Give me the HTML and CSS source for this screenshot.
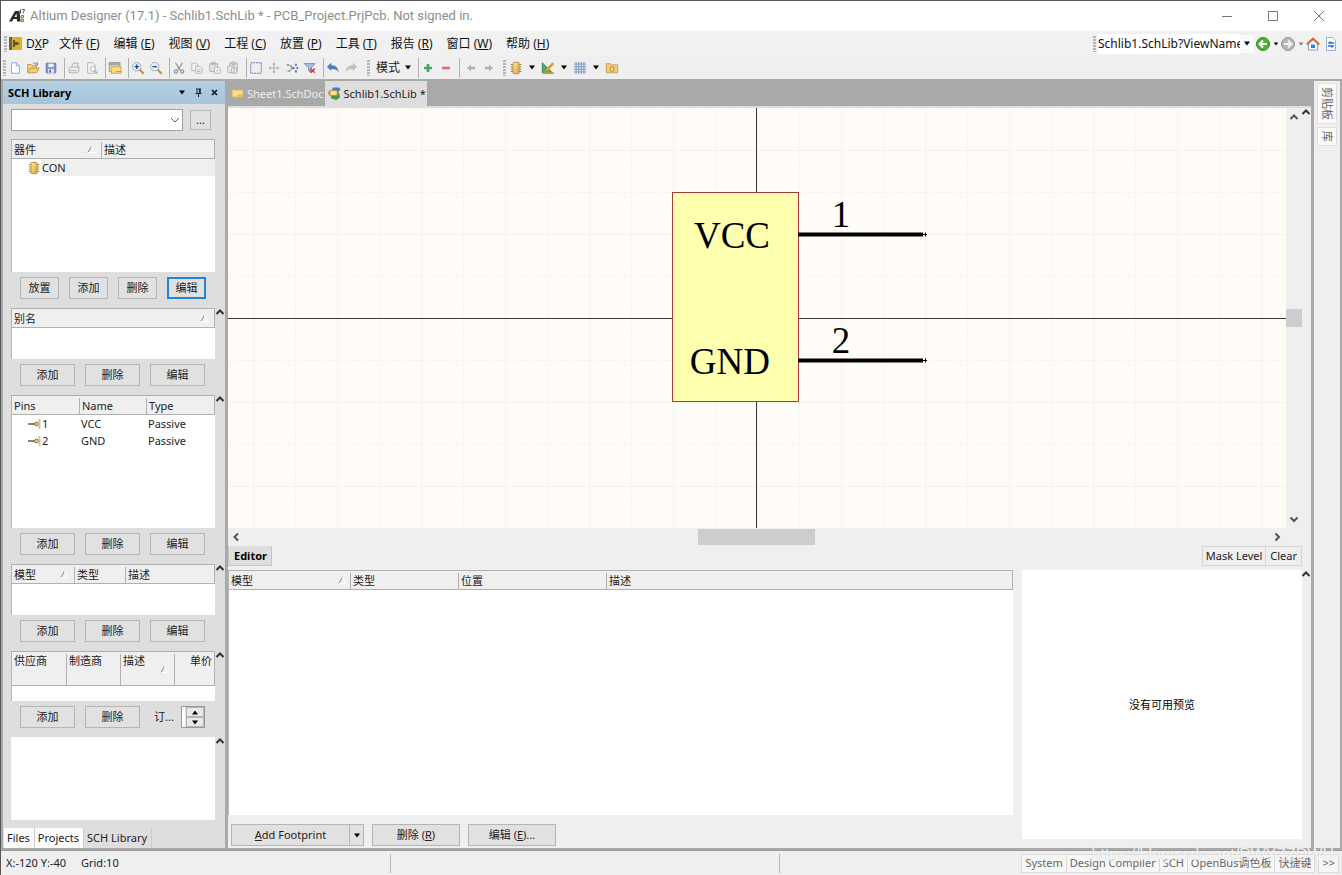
FILE: index.html
```html
<!DOCTYPE html>
<html lang="zh-CN">
<head>
<meta charset="utf-8">
<title>Altium Designer (17.1) - Schlib1.SchLib *</title>
<link rel="stylesheet" href="styles.css">
</head>
<body>
<svg class="defs" aria-hidden="true">
  <defs>
    <linearGradient id="gold" x1="0" y1="0" x2="1" y2="1"><stop offset="0" stop-color="#fbe9a9"/><stop offset="1" stop-color="#d9a93a"/></linearGradient>
    <symbol id="up" viewBox="0 0 10 10"><path d="M1.500 7 5 3.500 8.500 7" fill="none" stroke="#333" stroke-width="2"/></symbol>
    <symbol id="down" viewBox="0 0 8 5"><path d="M1 .5h6L4 4.500z" fill="#000"/></symbol>
    <symbol id="sort" viewBox="0 0 8 8"><path d="M1 7.500 4.500 1" fill="none" stroke="#888"/><path d="M4.500 1 7.500 7.500H1" fill="none" stroke="#fff"/></symbol>
    <symbol id="chip" viewBox="0 0 16 16"><path d="M2 4h12M2 6.700h12M2 9.300h12M2 12h12" stroke="#8c6f2c"/><rect x="4.500" y="1.500" width="7" height="13" rx="1" fill="url(#gold)" stroke="#b58d35"/></symbol>
    <symbol id="pin" viewBox="0 0 14 10"><path d="M1 5h7" stroke="#6b5a2a" stroke-width="1.500"/><circle cx="9.500" cy="5" r="1.800" fill="#ffe680" stroke="#6b5a2a"/><path d="M12.500 0v10" stroke="#c9c2ae" stroke-width="2"/></symbol>
  </defs>
</svg>
<div class="window">
  <header class="titlebar">
    <svg class="logo" viewBox="0 0 16 16"><path d="M0 13.500 6 3h4.500l1 10.500H8l-.2-2.500H4.500L3.200 13.500zM5.500 9h2.300L7.500 5.500z" fill="#2b2b2b"/><path d="M10.500 2.500 11.500 1.500v4M13 1.500h2.500L14 5.500" fill="none" stroke="#555"/><path d="M12 7.500h2.500v2.500H12zM12 11.500h2.500v2H12z" fill="#d9c79b" stroke="#9b8348"/></svg>
    <h1>Altium Designer (17.1) - Schlib1.SchLib * - PCB_Project.PrjPcb. Not signed in.</h1>
    <div class="caption">
      <button aria-label="Minimize"><svg viewBox="0 0 12 12"><path d="M1 6.500h10"/></svg></button>
      <button aria-label="Maximize"><svg viewBox="0 0 12 12"><path d="M1.500 1.500h9v9h-9z"/></svg></button>
      <button aria-label="Close"><svg viewBox="0 0 12 12"><path d="M1 1l10 10M11 1 1 11"/></svg></button>
    </div>
  </header>

  <div class="menubar">
    <i class="grip"></i>
    <nav class="menus">
      <button class="app"><svg class="dxp" viewBox="0 0 13 13"><rect width="13" height="13" rx="1" fill="#d9b22e"/><path d="M0 0h3v13H0z" fill="#6b6240"/><path d="M4 3h2v2h2.500l2 1.500-2 1.500H6v2H4z" fill="#5e5638"/></svg>D<u>X</u>P</button>
      <button>文件 (<u>F</u>)</button><button>编辑 (<u>E</u>)</button><button>视图 (<u>V</u>)</button><button>工程 (<u>C</u>)</button><button>放置 (<u>P</u>)</button><button>工具 (<u>T</u>)</button><button>报告 (<u>R</u>)</button><button>窗口 (<u>W</u>)</button><button>帮助 (<u>H</u>)</button>
    </nav>
    <div class="address">
      <i class="grip"></i>
      <input type="text" aria-label="Address" value="Schlib1.SchLib?ViewName=Schematic">
      <button class="drop" aria-label="Address list"><svg class="tri"><use href="#down"/></svg></button>
      <button aria-label="Back"><svg class="nav" viewBox="0 0 14 14"><circle cx="7" cy="7" r="6.500" fill="#4fae35" stroke="#39892a"/><path d="M7 3.500 3.500 7 7 10.500M4 7h7" fill="none" stroke="#fff" stroke-width="2"/></svg></button>
      <button class="drop" aria-label="Back list"><svg class="tri small"><use href="#down"/></svg></button>
      <button aria-label="Forward"><svg class="nav" viewBox="0 0 14 14"><circle cx="7" cy="7" r="6.500" fill="#b5b5b5" stroke="#999"/><path d="M7 3.500 10.500 7 7 10.500M10 7H3" fill="none" stroke="#f4f4f4" stroke-width="2"/></svg></button>
      <button class="drop faint" aria-label="Forward list"><svg class="tri small"><use href="#down"/></svg></button>
      <button aria-label="Home"><svg class="nav" viewBox="0 0 14 14"><path d="M2.500 6.500V13h9V6.500L7 2.500z" fill="#f6f9fd" stroke="#8aa3c4"/><path d="M.8 7.500 7 1.500l6.200 6" fill="none" stroke="#dd5b2e" stroke-width="1.800"/><path d="M5 7.500h4V11H5z" fill="#2f82d8"/></svg></button>
      <button class="gap" aria-label="Sync"><svg class="nav" viewBox="0 0 14 14"><path d="M2.500.5h6l3 3v10h-9z" fill="#f4f8ff" stroke="#9db1d0"/><path d="M10 6H5l1.500-1.500M4 9h5L7.500 10.500" fill="none" stroke="#2c6fd0" stroke-width="1.300"/></svg></button>
    </div>
  </div>

  <div class="toolbar">
    <i class="grip"></i>
    <button aria-label="New"><svg viewBox="0 0 16 16"><path d="M4 2h5.500L13 5.500V14H4z" fill="#fafcff" stroke="#8ba4cc"/><path d="M9.500 2v3.500H13" fill="none" stroke="#8ba4cc"/></svg></button>
    <button aria-label="Open"><svg viewBox="0 0 16 16"><path d="M2 13V4h4l1 1.500h5V8" fill="#f4dc9a" stroke="#b98d3c"/><path d="M2 13.500 5 8h10l-3 5.500z" fill="#f7cd74" stroke="#b98d3c"/><path d="M8 3.500c2-2 4-1.500 5 .5m0-2.500V4.500h-2.500" fill="none" stroke="#5d7ea8"/></svg></button>
    <button aria-label="Save"><svg viewBox="0 0 16 16"><path d="M2.500 2.500h11v11h-11z" fill="#7f93cb" stroke="#6577ab"/><path d="M5 3h6v4H5z" fill="#e9eefa"/><path d="M4.500 9h7v4.500h-7z" fill="#dfe4f0"/><path d="M6 10h2v3H6z" fill="#53669b"/></svg></button>
    <i class="sep"></i>
    <button aria-label="Print"><svg viewBox="0 0 16 16" fill="#ededed" stroke="#aaa"><path d="M5 7 7 2.500h6L11.500 7"/><path d="M2.500 8.500 4 7h10l-1 5.500-1.500 1h-9z"/><path d="M4 11h7" /></svg></button>
    <button aria-label="Preview"><svg viewBox="0 0 16 16" fill="#f4f4f4" stroke="#b0b0b0"><path d="M3 2h6l2.500 2.500V14H3z"/><circle cx="9" cy="9" r="3"/><path d="m11 11 3 3" stroke-width="2"/></svg></button>
    <i class="sep"></i>
    <button aria-label="Workspace"><svg viewBox="0 0 16 16"><path d="M1.500 2h12v10h-12z" fill="#f7edc4" stroke="#b3914a"/><path d="M1.500 2h12v2.500h-12z" fill="#a7b2c7" stroke="#8f97a5"/><path d="M3.500 6.500h11.500v7.500H3.500z" fill="#f8dc7e" stroke="#c9a34a"/><path d="M9 12h6" stroke="#b8943d"/></svg></button>
    <i class="sep"></i>
    <button aria-label="Zoom in"><svg viewBox="0 0 16 16"><path d="m9.500 9.500 5 5" stroke="#d58d38" stroke-width="2.500"/><circle cx="6.500" cy="6.500" r="4.800" fill="#e4effb" stroke="#8ea5c4"/><path d="M4 6.500h5M6.500 4v5" stroke="#27466f" stroke-width="1.500"/></svg></button>
    <button aria-label="Zoom out"><svg viewBox="0 0 16 16"><path d="m9.500 9.500 5 5" stroke="#d58d38" stroke-width="2.500"/><circle cx="6.500" cy="6.500" r="4.800" fill="#e4effb" stroke="#8ea5c4"/><path d="M4 6.500h5" stroke="#27466f" stroke-width="1.500"/></svg></button>
    <i class="sep"></i>
    <button aria-label="Cut"><svg viewBox="0 0 16 16" fill="none" stroke="#999" stroke-width="1.500"><path d="M4 2l6 9M12 2l-6 9"/><circle cx="4.500" cy="12" r="1.800"/><circle cx="11.500" cy="12" r="1.800"/></svg></button>
    <button aria-label="Copy"><svg viewBox="0 0 16 16" fill="#f1f1f1" stroke="#b5b5b5"><path d="M2 2.500h5L9 5v6H2z"/><path d="M6.500 6h5L14 8.500V14H6.500z"/><path d="M8 10h4M8 12h4"/></svg></button>
    <button aria-label="Paste"><svg viewBox="0 0 16 16" fill="#e2e2e2" stroke="#b0b0b0"><path d="M2 3h9v9H2zM4.500 1.500h4v3h-4z"/><path d="M7.500 7h4L14 9v5H7.500z" fill="#f6f6f6"/><path d="M9 11h3"/></svg></button>
    <button aria-label="Paste array"><svg viewBox="0 0 16 16" fill="#e2e2e2" stroke="#b0b0b0"><path d="M4 2.500h9v9H4zM6.500 1h4v3h-4z"/><path d="M2 6h7v7H2zM6 8h6v6H6z" fill="#eee"/></svg></button>
    <i class="sep"></i>
    <button aria-label="Select"><svg viewBox="0 0 16 16"><path d="M2 2h12v12H2z" fill="none" stroke="#4668ae" stroke-dasharray="2 1"/></svg></button>
    <button aria-label="Move"><svg viewBox="0 0 16 16"><path d="M8 2v12M2 8h12M6.500 3.500h3M6.500 12.500h3M3.500 6.500v3M12.500 6.500v3" stroke="#a3a3a3"/></svg></button>
    <button aria-label="Deselect"><svg viewBox="0 0 16 16" fill="none" stroke="#777"><path d="M2 4.500h3l4 3.500-4 3.500H2" stroke-width="1.500" stroke-dasharray="3 1"/><path d="M12.500 3v2.500M12.500 10.500V13M10 7v2M14 7v2" stroke="#4668ae" stroke-width="2"/></svg></button>
    <button aria-label="Clear filter"><svg viewBox="0 0 16 16"><path d="M1.500 3h12L9 8v5l-2.500-1.500V8z" fill="#a9c2e4" stroke="#6383b1"/><path d="m8.500 8.500 5 5m0-5-5 5" stroke="#cf3a3a" stroke-width="1.800"/></svg></button>
    <i class="sep"></i>
    <button aria-label="Undo"><svg viewBox="0 0 16 16"><path d="M1 6.500 6 2v2.800c5 0 8 2.700 8.500 8.200-1.500-3-4-4-8.500-4V11.500z" fill="#4a7fc1"/></svg></button>
    <button aria-label="Redo"><svg viewBox="0 0 16 16"><path d="M15 6.500 10 2v2.800c-5 0-8 2.700-8.500 8.200 1.500-3 4-4 8.500-4V11.500z" fill="#c1c1c1"/></svg></button>
    <i class="grip mid"></i>
    <button class="mode">模式<svg class="tri"><use href="#down"/></svg></button>
    <i class="sep"></i>
    <button aria-label="Add part"><svg viewBox="0 0 16 16"><path d="M8 3.500v9M3.500 8h9" stroke="#43a561" stroke-width="3"/></svg></button>
    <button aria-label="Remove part"><svg viewBox="0 0 16 16"><path d="M3.500 8h9" stroke="#dd6b70" stroke-width="3"/></svg></button>
    <i class="sep wide"></i>
    <button aria-label="Previous part"><svg viewBox="0 0 16 16"><path d="M3.500 8 8 4v2.500h4.500v3H8V12z" fill="#b3b3b3"/></svg></button>
    <button aria-label="Next part"><svg viewBox="0 0 16 16"><path d="M12.500 8 8 4v2.500H3.500v3H8V12z" fill="#b3b3b3"/></svg></button>
    <i class="grip parts"></i>
    <button aria-label="Place part"><svg viewBox="0 0 16 16"><use href="#chip"/></svg></button>
    <button class="list" aria-label="Part list"><svg class="tri"><use href="#down"/></svg></button>
    <button aria-label="Drawing tools"><svg viewBox="0 0 16 16"><path d="M1.500 2v11.500H13z" fill="#47ac75" stroke="#26804d"/><path d="m6 11 8-8.500" stroke="#e09a28" stroke-width="3"/><path d="M2 14h13" stroke="#d8a128" stroke-width="2"/></svg></button>
    <button class="list" aria-label="Drawing list"><svg class="tri"><use href="#down"/></svg></button>
    <button aria-label="Grid"><svg viewBox="0 0 16 16"><path d="M3.500 1v14M6.500 1v14M9.500 1v14M12.500 1v14M1 3.500h14M1 6.500h14M1 9.500h14M1 12.500h14" stroke="#6f8fc4"/></svg></button>
    <button class="list" aria-label="Grid list"><svg class="tri"><use href="#down"/></svg></button>
    <button aria-label="Model manager"><svg viewBox="0 0 16 16"><path d="M1.500 13.500V3H6l1.500 1.500h7v9z" fill="#f2ce7c" stroke="#c2964a"/><path d="M6 7h4v4.500H6z" fill="#f6dfa2" stroke="#b08432"/></svg></button>
  </div>

  <div class="workspace">
    <aside class="panel">
      <div class="panel-head">
        <h2>SCH Library</h2>
        <button aria-label="Panel menu"><svg class="tri"><use href="#down"/></svg></button>
        <button aria-label="Pin panel"><svg viewBox="0 0 9 9"><path d="M2 1h5M3 1v4M6 1v4M1.500 5.500h6M4.500 5v4" stroke="#222" fill="none"/><path d="M5 1h1.500v4H5z" fill="#222"/></svg></button>
        <button aria-label="Close panel"><svg viewBox="0 0 9 9"><path d="m2 2 5 5m0-5L2 7" stroke="#111" stroke-width="1.600"/></svg></button>
      </div>
      <div class="filter">
        <div class="combo">
          <select aria-label="Filter"><option></option></select>
          <svg viewBox="0 0 10 6"><path d="m1 1 4 4 4-4" fill="none" stroke="#666"/></svg>
        </div>
        <button class="btn">...</button>
      </div>

      <section class="grow">
        <div class="listbox">
          <table>
            <colgroup><col class="w89"><col></colgroup>
            <thead><tr><th>器件<svg class="sort"><use href="#sort"/></svg></th><th>描述</th></tr></thead>
            <tbody><tr><td class="lead"><svg class="part"><use href="#chip"/></svg><span>CON</span></td><td class="sel"></td></tr></tbody>
          </table>
        </div>
        <div class="buttons four"><button class="btn">放置</button><button class="btn">添加</button><button class="btn">删除</button><button class="btn focus">编辑</button></div>
      </section>

      <section>
        <button class="fold" aria-label="Collapse"><svg><use href="#up"/></svg></button>
        <div class="listbox short">
          <table><thead><tr><th>别名<svg class="sort"><use href="#sort"/></svg></th></tr></thead></table>
        </div>
        <div class="buttons"><button class="btn">添加</button><button class="btn">删除</button><button class="btn">编辑</button></div>
      </section>

      <section class="grow">
        <button class="fold" aria-label="Collapse"><svg><use href="#up"/></svg></button>
        <div class="listbox">
          <table>
            <colgroup><col class="w67"><col class="w67"><col></colgroup>
            <thead><tr><th>Pins</th><th>Name</th><th>Type</th></tr></thead>
            <tbody>
              <tr><td class="lead"><svg class="pin"><use href="#pin"/></svg>1</td><td>VCC</td><td>Passive</td></tr>
              <tr><td class="lead"><svg class="pin"><use href="#pin"/></svg>2</td><td>GND</td><td>Passive</td></tr>
            </tbody>
          </table>
        </div>
        <div class="buttons"><button class="btn">添加</button><button class="btn">删除</button><button class="btn">编辑</button></div>
      </section>

      <section>
        <button class="fold" aria-label="Collapse"><svg><use href="#up"/></svg></button>
        <div class="listbox short">
          <table>
            <colgroup><col class="w62"><col class="w51"><col></colgroup>
            <thead><tr><th>模型<svg class="sort"><use href="#sort"/></svg></th><th>类型</th><th>描述</th></tr></thead>
          </table>
        </div>
        <div class="buttons"><button class="btn">添加</button><button class="btn">删除</button><button class="btn">编辑</button></div>
      </section>

      <section>
        <button class="fold" aria-label="Collapse"><svg><use href="#up"/></svg></button>
        <div class="listbox suppliers">
          <table class="tall">
            <colgroup><col class="w54"><col class="w54"><col class="w54"><col></colgroup>
            <thead><tr><th>供应商</th><th>制造商</th><th>描述<svg class="sort"><use href="#sort"/></svg></th><th class="right">单价</th></tr></thead>
          </table>
        </div>
        <div class="buttons">
          <button class="btn">添加</button><button class="btn">删除</button>
          <div class="order"><span>订...</span>
            <div class="spin"><button aria-label="Increase"><svg class="tri flip"><use href="#down"/></svg></button><button aria-label="Decrease"><svg class="tri"><use href="#down"/></svg></button></div>
          </div>
        </div>
      </section>

      <section class="last">
        <button class="fold" aria-label="Collapse"><svg><use href="#up"/></svg></button>
        <div class="preview-box"></div>
      </section>

      <div class="panel-tabs"><button>Files</button><button>Projects</button><button class="on">SCH Library</button></div>
    </aside>

    <main class="doc">
      <div class="doc-tabs">
        <button><svg viewBox="0 0 14 14"><path d="M1 3h12v8H1z" fill="#f8df8e" stroke="#cfa648"/><path d="M7 8h6v3H7z" fill="#e5bd58"/></svg>Sheet1.SchDoc</button>
        <button class="on"><svg viewBox="0 0 14 14"><path d="M4 8l8-1 1 4-4 3-6-2z" fill="#3b9b48"/><path d="M5 .5h7l1.500 2.500L11 5H5z" fill="#3c80cf"/><rect x="2" y="3.500" width="8" height="6" rx="1" fill="#fae08b" stroke="#9a782c"/><path d="M0 5.500h2M0 7.500h2M10 5.500h2M10 7.500h2" stroke="#9a782c"/></svg>Schlib1.SchLib *</button>
      </div>
      <div class="doc-body">
        <div class="view">
          <div class="canvas">
            <svg class="sheet" width="100%" height="100%">
              <defs>
                <pattern id="grid" width="84" height="84" patternUnits="userSpaceOnUse">
                  <path d="M0 .5h84M.5 0v84" stroke="#f5f3f0"/>
                  <path d="M0 42.500h84M42.500 0v84" stroke="#f5f2ee" stroke-dasharray="3 2"/>
                </pattern>
              </defs>
              <svg x="50%" y="50%" overflow="visible">
                <rect x="-2017" y="-1008" width="4034" height="2016" fill="url(#grid)"/>
                <path d="M-2000 .5h4000M-.5-1000v2000" stroke="#3c3838"/>
                <rect x="-84.500" y="-125.500" width="126" height="209" fill="#ffffb0" stroke="#a83c3c"/>
                <path d="M41-83.500h125M41 42.500h125" stroke="#000" stroke-width="4"/>
                <path d="M166-83.500h4M168.500-85.500v4M166 42.500h4M168.500 40.500v4" stroke="#000"/>
                <g class="pin-text">
                  <text x="13" y="-70" text-anchor="end">VCC</text>
                  <text x="13" y="56" text-anchor="end">GND</text>
                  <text x="84" y="-91" text-anchor="middle">1</text>
                  <text x="84" y="35" text-anchor="middle">2</text>
                </g>
              </svg>
            </svg>
            <div class="vscroll">
              <button aria-label="Scroll up"><svg viewBox="0 0 10 10"><path d="M1.500 7 5 3.500 8.500 7"/></svg></button>
              <i></i>
              <button aria-label="Scroll down"><svg viewBox="0 0 10 10"><path d="M1.500 3.500 5 7l3.500-3.500"/></svg></button>
            </div>
          </div>
          <div class="hscroll">
            <button aria-label="Scroll left"><svg viewBox="0 0 10 10"><path d="M7 1.500 3.500 5 7 8.500"/></svg></button>
            <i></i>
            <button aria-label="Scroll right"><svg viewBox="0 0 10 10"><path d="M3.500 1.500 7 5 3.500 8.500"/></svg></button>
          </div>
          <div class="editor-bar"><button class="editor-tab">Editor</button><button class="mask">Mask Level</button><button class="mask">Clear</button></div>
          <button class="fold" aria-label="Collapse"><svg><use href="#up"/></svg></button>
        </div>
        <div class="editor">
          <div class="models">
            <div class="listbox">
              <table>
                <colgroup><col class="w121"><col class="w108"><col class="w148"><col></colgroup>
                <thead><tr><th>模型<svg class="sort"><use href="#sort"/></svg></th><th>类型</th><th>位置</th><th>描述</th></tr></thead>
              </table>
            </div>
            <div class="actions">
              <div class="split"><button class="btn"><u>A</u>dd Footprint</button><button class="btn" aria-label="Footprint list"><svg class="tri"><use href="#down"/></svg></button></div>
              <button class="btn">删除 (<u>R</u>)</button>
              <button class="btn">编辑 (<u>E</u>)...</button>
            </div>
          </div>
          <div class="preview">没有可用预览</div>
          <button class="fold" aria-label="Collapse"><svg><use href="#up"/></svg></button>
        </div>
      </div>
    </main>

    <aside class="side-tabs"><button>剪贴板</button><button>库</button></aside>
  </div>

  <footer class="status">
    <span class="coords">X:-120 Y:-40</span><span>Grid:10</span>
    <i class="mark first"></i><i class="mark second"></i>
    <div class="status-tabs"><button>System</button><button>Design Compiler</button><button>SCH</button><button>OpenBus调色板</button><button>快捷键</button></div>
    <button class="more">&gt;&gt;</button>
    <span class="watermark">https://blog.csdn.net/RWYZZDWH</span>
  </footer>
</div>
</body>
</html>
```
FILE: styles.css
```css
* { box-sizing: border-box; }

body {
  margin: 0;
  background: #efefef;
  color: #222;
  font: 11px/16px "Noto Sans", "Noto Sans CJK SC", sans-serif;
}

button, input, select {
  margin: 0;
  padding: 0;
  border: 0;
  background: none;
  color: inherit;
  font: inherit;
  white-space: nowrap;
}

svg { display: block; flex: none; }
.defs { position: absolute; width: 0; height: 0; }
.tri { width: 8px; height: 5px; }
.tri.small { width: 6px; height: 4px; }
.flip { transform: rotate(180deg); }

.window {
  display: flex;
  flex-direction: column;
  height: 100vh;
  min-height: 720px;
  border-top: 1px solid #55585e;
  border-left: 1px solid #555;
}

/* Title */
.titlebar {
  display: flex;
  align-items: center;
  flex: none;
  height: 30px;
  padding-left: 8px;
  background: #fff;
}
.logo { width: 16px; height: 16px; }
.titlebar h1 {
  flex: 1;
  margin: 0 0 0 5px;
  color: #8d8d8d;
  font: 400 13px/16px Roboto, "Noto Sans", sans-serif;
}
.caption { display: flex; }
.caption button { display: grid; place-items: center; width: 46px; height: 30px; }
.caption svg { width: 12px; height: 12px; fill: none; stroke: #777; }

/* Menus */
.grip {
  flex: none;
  width: 3px;
  height: 16px;
  background: repeating-linear-gradient(#b5b5b5 0 2px, #efefef 2px 3px);
}
.menubar {
  display: flex;
  align-items: center;
  flex: none;
  height: 25px;
  padding: 0 4px 0 3px;
  background: #f1f1f1;
  font-size: 12px;
  color: #111;
}
.menus { display: flex; flex: 1; gap: 14px; margin-left: 2px; }
.menus button { display: flex; white-space: pre; }
.menus .app { width: 36px; }
.dxp { width: 13px; height: 13px; margin: 1px 4px 0 0; }
.address { display: flex; align-items: center; }
.address input { width: 142px; height: 20px; margin-left: 2px; background: #fff; }
.address button { display: grid; place-items: center; height: 18px; }
.address .drop { width: 11px; }
.address input + .drop { width: 14px; margin-right: 2px; background: #fafafa; }
.address .gap { margin-left: 4px; }
.faint { opacity: .5; }
.nav { width: 14px; height: 14px; }

/* Toolbar */
.toolbar {
  display: flex;
  align-items: center;
  flex: none;
  height: 23px;
  padding-left: 2px;
  background: #efefef;
}
.toolbar button { display: grid; place-items: center; width: 18px; height: 20px; }
.toolbar button svg { width: 14px; height: 14px; }
.toolbar button .tri { width: 8px; height: 5px; }
.toolbar .sep { flex: none; width: 5px; height: 20px; border-right: 1px solid #b0b0b0; }
.toolbar .sep.wide { margin-right: 2px; }
.toolbar .mid { margin: 0 6px 0 7px; }
.toolbar .parts { margin: 0 1px 0 5px; }
.toolbar .mode { display: flex; align-items: center; gap: 4px; width: 38px; font-size: 12px; }
.toolbar .list { width: 14px; }

/* Workspace */
.workspace {
  display: flex;
  flex: 1;
  min-height: 0;
  padding: 2px;
  border-bottom: 1px solid #999;
  background: #a9a9a9;
}

.panel {
  display: flex;
  flex-direction: column;
  flex: none;
  width: 222px;
  background: #dedede;
}
.panel-head {
  display: flex;
  align-items: center;
  height: 23px;
  margin-bottom: 5px;
  padding: 0 3px 0 5px;
  background: linear-gradient(#b4cfe2, #a5c5da);
}
.panel-head h2 { flex: 1; margin: 0; color: #000; font-size: 11px; }
.panel-head button { display: grid; place-items: center; width: 16px; height: 16px; }
.panel-head svg { width: 9px; height: 9px; }
.panel-head .tri { width: 8px; height: 5px; }

.filter { display: flex; align-items: center; gap: 7px; margin: 0 14px 8px 8px; }
.combo { display: grid; flex: 1; align-items: center; }
.combo select {
  grid-area: 1 / 1;
  width: 100%;
  height: 22px;
  border: 1px solid #a0a0a0;
  background: #fff;
  appearance: none;
}
.combo svg { grid-area: 1 / 1; justify-self: end; width: 10px; height: 6px; margin-right: 3px; pointer-events: none; }
.filter .btn { width: 21px; height: 20px; }

.btn {
  height: 22px;
  border: 1px solid #b5b5b5;
  background: #e1e1e1;
}
.btn.focus { border: 2px solid #2284d8; }

.panel section {
  position: relative;
  display: flex;
  flex-direction: column;
  margin-bottom: 9px;
  padding: 0 10px 0 8px;
}
.panel section.grow { flex: 1; min-height: 0; }
.panel section.last { margin-bottom: 8px; }
.fold { position: absolute; top: -1px; right: 0; width: 10px; height: 10px; }
.fold svg { width: 10px; height: 10px; }

.listbox { background: #fff; border-left: 1px solid #b5b5b5; }
.grow .listbox { flex: 1; min-height: 0; }
.short { height: 51px; }
.suppliers { height: 50px; }
table { width: 100%; border-collapse: separate; border-spacing: 0; table-layout: fixed; }
th {
  position: relative;
  height: 20px;
  padding: 0 2px;
  border: solid #b0b0b0;
  border-width: 1px 0;
  background: #efefef;
  font-weight: 400;
  line-height: 17px;
  text-align: left;
  white-space: nowrap;
}
th + th { background: linear-gradient(#b0b0b0, #b0b0b0) 0 2px / 1px 100% no-repeat #efefef; padding-left: 3px; }
th:last-child { border-right: 1px solid #b0b0b0; }
.sort { position: absolute; right: 6px; bottom: 5px; width: 8px; height: 8px; }
.tall th { height: 35px; vertical-align: top; }
.tall .sort { bottom: 12px; }
.right { text-align: right; }
td { height: 17px; padding: 0 2px; line-height: 17px; white-space: nowrap; }
.sel, .lead span { background: #efefef; }
.lead { display: flex; align-items: center; padding: 0 0 0 15px; }
.lead span { flex: 1; padding-left: 1px; }
.part { width: 14px; height: 14px; }
.pin { width: 14px; height: 10px; margin-right: 1px; }
.w51 { width: 51px; } .w54 { width: 54px; } .w62 { width: 62px; } .w67 { width: 67px; }
.w89 { width: 89px; } .w108 { width: 108px; } .w121 { width: 121px; } .w148 { width: 148px; }

.buttons { display: grid; grid-template-columns: repeat(3, 1fr); gap: 10px; margin: 5px 10px 0 9px; }
.buttons.four { grid-template-columns: repeat(4, 1fr); margin-right: 9px; }
.order { display: flex; align-items: center; justify-content: space-between; padding-left: 4px; }
.spin { display: flex; flex-direction: column; width: 24px; height: 22px; padding-left: 4px; border: 1px solid #999; background: linear-gradient(90deg, #fff 3px, #dedede 3px); }
.spin button { display: grid; place-items: center; flex: 1; border: 1px solid #b5b5b5; background: #e8e8e8; }
.preview-box { height: 83px; background: #fff; }

.panel-tabs { display: flex; height: 20px; padding-left: 1px; }
.panel-tabs button { padding: 0 4px 0 3px; border-right: 1px solid #ccc; background: #fcfcfc; }
.panel-tabs .on { background: #dedede; }

/* Document */
.doc { display: flex; flex-direction: column; flex: 1; min-width: 0; margin-left: 3px; }
.doc-tabs { display: flex; flex: none; height: 25px; }
.doc-tabs button { display: flex; align-items: center; gap: 3px; padding: 0 1px 0 3px; color: #eee; }
.doc-tabs .on { background: #dedede; color: #222; }
.doc-tabs svg { width: 13px; height: 13px; }
.doc-body {
  display: flex;
  flex-direction: column;
  flex: 1;
  min-height: 0;
  margin-right: 3px;
  border-top: 2px solid #dedede;
  background: #efefef;
}
.view { position: relative; display: flex; flex-direction: column; flex: 3; min-height: 0; padding-right: 9px; }
.canvas { display: flex; flex: 1; min-height: 0; }
.sheet { flex: 1; min-width: 0; background: #fffcf8; }
.pin-text { font: 37px "Liberation Serif", serif; fill: #000; }
.vscroll, .hscroll { display: flex; flex: none; align-items: center; justify-content: space-between; }
.vscroll { flex-direction: column; width: 16px; padding: 3px 0; }
.hscroll { height: 18px; padding: 0 19px 0 2px; }
.vscroll i { width: 16px; height: 18px; background: #cdcdcd; }
.hscroll i { width: 117px; height: 16px; background: #cdcdcd; }
.vscroll svg, .hscroll svg { width: 10px; height: 10px; margin: 1px; fill: none; stroke: #555; stroke-width: 2; }
.editor-bar { display: flex; flex: none; height: 20px; margin-bottom: 4px; }
.editor-tab { margin-right: auto; padding: 0 4px 0 5px; border: 1px solid #c5c5c5; border-top: 0; background: #dedede; color: #000; font-weight: 700; }
.mask { padding: 0 3px; border: 1px solid #d5d5d5; }
.mask + .mask { margin-left: -1px; padding: 0 4px; }
.editor { position: relative; display: flex; flex: none; height: 278px; padding-right: 9px; }
.models { display: flex; flex-direction: column; flex: 1; min-width: 0; margin-right: 9px; }
.models .listbox { flex: 1; }
.models .sort { right: 4px; }
.actions { display: flex; gap: 8px; margin: 9px 0 2px 3px; }
.actions .btn { width: 88px; }
.split { display: flex; }
.split .btn:first-child { width: 118px; border-right: 0; }
.split .btn:last-child { display: grid; place-items: center; width: 15px; }
.preview { display: grid; place-items: center; width: 280px; margin-bottom: 9px; background: #fff; color: #000; }

.side-tabs {
  display: flex;
  flex-direction: column;
  flex: none;
  gap: 3px;
  width: 26px;
  padding: 2px 3px;
  background: #efefef;
}
.side-tabs button {
  padding: 3px 0;
  border: 1px solid #e0e0e0;
  background: #fafafa;
  color: #666;
  writing-mode: vertical-rl;
  text-orientation: sideways;
  line-height: 18px;
}

/* Status */
.status { position: relative; display: flex; align-items: center; flex: none; height: 24px; padding: 0 3px 0 5px; }
.coords { margin-right: 15px; }
.mark { position: absolute; top: 3px; width: 1px; height: 19px; background: #bbb; }
.first { left: 29%; }
.second { left: 58%; }
.status-tabs { display: flex; margin-left: auto; }
.status-tabs button, .more { height: 19px; padding: 0 3px; border: 1px solid #dadada; background: #f7f7f7; color: #666; }
.status-tabs button + button { border-left: 0; }
.more { margin-left: 3px; }
.watermark { position: absolute; right: 8px; top: -6px; color: #fff; font: 16px/20px "Liberation Sans", sans-serif; opacity: .8; text-shadow: 0 0 1px #aaa; pointer-events: none; }
```
